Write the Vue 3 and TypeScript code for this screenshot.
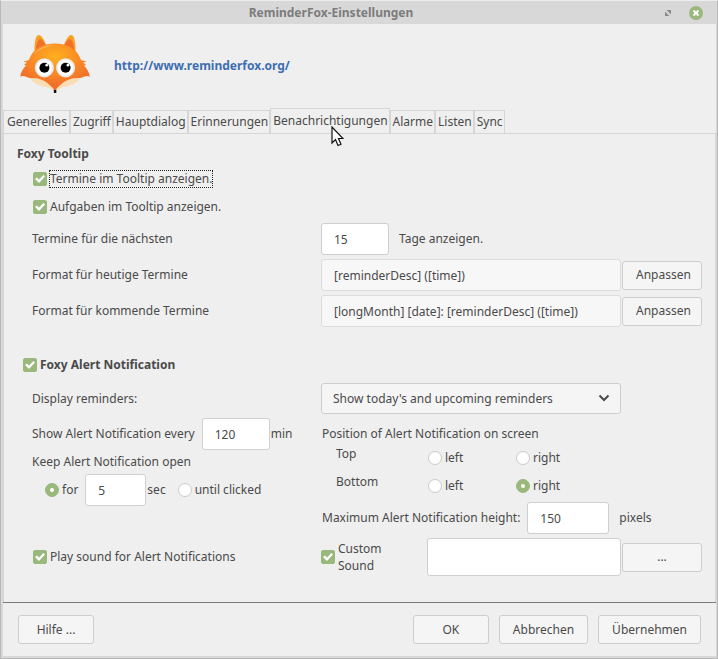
<script setup lang="ts">
import { ref } from 'vue'

const tabs: string[] = [
  'Generelles',
  'Zugriff',
  'Hauptdialog',
  'Erinnerungen',
  'Benachrichtigungen',
  'Alarme',
  'Listen',
  'Sync',
]
const activeTab = ref('Benachrichtigungen')

const showEvents = ref(true)
const showTodos = ref(true)
const days = ref('15')
const todayFormat = ref('[reminderDesc] ([time])')
const upcomingFormat = ref('[longMonth] [date]: [reminderDesc] ([time])')

const alertEnabled = ref(true)
const displayMode = ref('upcoming')
const interval = ref('120')
const keepOpen = ref('for')
const seconds = ref('5')
const position = ref('bottom-right')
const maxHeight = ref('150')
const playSound = ref(true)
const customSound = ref(true)
const soundFile = ref('')
</script>

<template>
  <div class="window">
    <header class="titlebar">
      <h1 class="title">ReminderFox-Einstellungen</h1>
      <div class="window-buttons">
        <button type="button" class="win-btn" aria-label="Maximieren">
          <svg width="6" height="6" viewBox="0 0 6 6" fill="#8c8c8c">
            <path d="M1.500 0H6V4.500zM0 1.500L4.500 6H0z" />
          </svg>
        </button>
        <button type="button" class="win-btn" aria-label="Schließen">
          <svg width="14" height="14" viewBox="0 0 14 14">
            <circle cx="7" cy="7" r="7" fill="#9ab87c" />
            <path d="M4.500 4.500L9.500 9.500M9.500 4.500L4.500 9.500" stroke="#fff" stroke-width="2" />
          </svg>
        </button>
      </div>
    </header>

    <main class="content">
      <div class="brand">
        <svg class="fox" width="70" height="58" viewBox="0 0 210 175" aria-hidden="true">
          <defs>
            <radialGradient id="fur" cx="50%" cy="28%" r="60%">
              <stop offset="0" stop-color="#ffb01c" />
              <stop offset="0.5" stop-color="#fa9025" />
              <stop offset="1" stop-color="#f26f2a" />
            </radialGradient>
            <radialGradient id="eye" cx="50%" cy="50%" r="50%">
              <stop offset="0.7" stop-color="#ffffff" />
              <stop offset="1" stop-color="#dedfe3" />
            </radialGradient>
          </defs>
          <path d="M43 52C43 28 45 0 56 0C64 0 72 14 78 30L60 52z" fill="#f9a01f" />
          <path d="M167 52C167 28 165 0 154 0C146 0 138 14 132 30L150 52z" fill="#f9a01f" />
          <path d="M46 52C47 32 53 12 61 12C68 14 74 24 78 34z" fill="#f1702c" />
          <path d="M164 52C163 32 157 12 149 12C142 14 136 24 132 34z" fill="#f1702c" />
          <path d="M28 128C36 144 62 156 80 157L105 168L130 157C148 156 174 144 182 128L105 120z" fill="#f8ddb5" />
          <path
            d="M0 126C2 112 10 100 17 93L12 88L21 84L10 80C20 78 24 77 27 74C38 43 67 26 105 26C143 26 172 43 183 74C186 77 190 78 200 80L189 84L198 88L193 93C200 100 208 112 210 126C198 120 190 130 178 130C150 128 128 140 105 167C82 140 60 128 32 130C20 130 12 120 0 126z"
            fill="url(#fur)"
          />
          <path d="M40 59C55 38 80 29 111 30C80 34 58 43 40 59z" fill="#ffc36a" opacity="0.7" />
          <circle cx="73" cy="99" r="29" fill="url(#eye)" />
          <circle cx="137" cy="99" r="29" fill="url(#eye)" />
          <circle cx="73" cy="99" r="15" fill="#000" />
          <circle cx="137" cy="99" r="15" fill="#000" />
          <circle cx="80" cy="91" r="4" fill="#fff" />
          <circle cx="144" cy="91" r="4" fill="#fff" />
          <path d="M101 165H109V175H102z" fill="#111" />
        </svg>
        <a class="site" href="http://www.reminderfox.org/">http://www.reminderfox.org/</a>
      </div>

      <div class="tabs" role="tablist">
        <button
          v-for="tab in tabs"
          :key="tab"
          type="button"
          role="tab"
          class="tab"
          :class="{ active: tab === activeTab }"
          :aria-selected="tab === activeTab"
          @click="activeTab = tab"
        >
          {{ tab }}
          <svg v-if="tab === 'Benachrichtigungen'" class="pointer" width="13" height="21" viewBox="0 0 13 21" aria-hidden="true">
            <path d="M1 1V17L4.500 13.500L7 19.500L10 18.200L7.500 12.500H12z" fill="#fff" stroke="#111" stroke-width="1.200" />
          </svg>
        </button>
      </div>

      <section class="panel" role="tabpanel">
        <h2 class="heading">Foxy Tooltip</h2>
        <div class="checks">
          <label class="choice"><input v-model="showEvents" type="checkbox" /><span class="focused">Termine im Tooltip anzeigen.</span></label>
          <label class="choice"><input v-model="showTodos" type="checkbox" /><span>Aufgaben im Tooltip anzeigen.</span></label>
        </div>

        <div class="rows">
          <div class="row">
            <label for="days">Termine für die nächsten</label>
            <div class="field">
              <input id="days" v-model="days" class="text small" type="text" />
              <span class="unit">Tage anzeigen.</span>
            </div>
          </div>
          <div class="row">
            <label for="today">Format für heutige Termine</label>
            <div class="field">
              <input id="today" v-model="todayFormat" class="text grow" type="text" readonly />
              <button type="button" class="btn customize">Anpassen</button>
            </div>
          </div>
          <div class="row">
            <label for="upcoming">Format für kommende Termine</label>
            <div class="field">
              <input id="upcoming" v-model="upcomingFormat" class="text grow" type="text" readonly />
              <button type="button" class="btn customize">Anpassen</button>
            </div>
          </div>
        </div>

        <label class="choice alert-toggle"><input v-model="alertEnabled" type="checkbox" /><strong>Foxy Alert Notification</strong></label>

        <div class="row display-row">
          <label for="display">Display reminders:</label>
          <div class="select">
            <select id="display" v-model="displayMode">
              <option value="upcoming">Show today's and upcoming reminders</option>
              <option value="today">Show today's reminders</option>
            </select>
            <svg class="chevron" width="12" height="8" viewBox="0 0 12 8" aria-hidden="true">
              <path d="M1.500 1.500L6 6L10.500 1.500" fill="none" stroke="#4a4a4a" stroke-width="2" />
            </svg>
          </div>
        </div>

        <div class="row split">
          <div class="left">
            <div class="line tall">
              <label for="interval">Show Alert Notification every</label>
              <input id="interval" v-model="interval" class="text small" type="text" />
              <span>min</span>
            </div>
            <div class="line keep">Keep Alert Notification open</div>
            <div class="line tall keep-options">
              <label class="choice"><input v-model="keepOpen" type="radio" name="keep" value="for" /><span>for</span></label>
              <input v-model="seconds" class="text seconds" type="text" aria-label="sec" />
              <span>sec</span>
              <label class="choice until"><input v-model="keepOpen" type="radio" name="keep" value="click" /><span>until clicked</span></label>
            </div>
          </div>

          <div class="right">
            <div class="line tall">Position of Alert Notification on screen</div>
            <div class="positions">
              <span>Top</span>
              <label class="choice"><input v-model="position" type="radio" name="position" value="top-left" /><span>left</span></label>
              <label class="choice"><input v-model="position" type="radio" name="position" value="top-right" /><span>right</span></label>
              <span>Bottom</span>
              <label class="choice"><input v-model="position" type="radio" name="position" value="bottom-left" /><span>left</span></label>
              <label class="choice"><input v-model="position" type="radio" name="position" value="bottom-right" /><span>right</span></label>
            </div>
            <div class="line tall">
              <label for="height">Maximum Alert Notification height:</label>
              <input id="height" v-model="maxHeight" class="text height" type="text" />
              <span class="unit">pixels</span>
            </div>
          </div>
        </div>

        <div class="row sound">
          <label class="choice"><input v-model="playSound" type="checkbox" /><span>Play sound for Alert Notifications</span></label>
          <div class="field">
            <label class="choice custom"><input v-model="customSound" type="checkbox" /><span>Custom Sound</span></label>
            <input v-model="soundFile" class="text grow file" type="text" aria-label="Custom Sound" />
            <button type="button" class="btn customize">...</button>
          </div>
        </div>
      </section>

      <footer class="footer">
        <button type="button" class="btn help">Hilfe ...</button>
        <button type="button" class="btn ok">OK</button>
        <button type="button" class="btn">Abbrechen</button>
        <button type="button" class="btn">Übernehmen</button>
      </footer>
    </main>
  </div>
</template>

<style>
body {
  background: #efefef;
}
</style>

<style scoped>
.window {
  box-sizing: border-box;
  min-height: 100vh;
  display: flex;
  flex-direction: column;
  padding: 0 1px 2px 2px;
  border: 1px solid #b8b8b8;
  border-top-color: #ececec;
  background: #d8d8d8;
  color: #4a4a4a;
  font: 12px/16px "Noto Sans", sans-serif;
}
.window *,
.window *::before {
  box-sizing: border-box;
}
.titlebar {
  display: grid;
  grid-template-columns: 1fr auto 1fr;
  align-items: center;
  height: 23px;
  padding-right: 13px;
}
.title {
  grid-column: 2;
  margin: 0 44px 0 0;
  font-size: 12px;
  font-weight: 700;
  color: #7c7c7c;
}
.window-buttons {
  display: flex;
  align-items: center;
  justify-content: flex-end;
  gap: 18px;
}
.win-btn {
  display: flex;
  padding: 0;
  border: 0;
  background: none;
}
.content {
  flex: 1;
  display: flex;
  flex-direction: column;
  background: #efefef;
}
.brand {
  display: flex;
  align-items: center;
  gap: 24px;
  height: 84px;
  padding: 0 17px;
}
.fox {
  margin-bottom: 4px;
}
.site {
  color: #3e6eb2;
  font-weight: 700;
  text-decoration: none;
}
.tabs {
  display: flex;
  align-items: flex-end;
  height: 25px;
}
.tab {
  position: relative;
  height: 23px;
  padding: 0 1px 1px 2px;
  border: 1px solid #d6d6d6;
  border-bottom: 0;
  background: #efefef;
  color: inherit;
  font: inherit;
  white-space: nowrap;
}
.tab:first-child {
  padding-left: 3px;
  padding-right: 2px;
}
.tab.active {
  height: 25px;
}
.pointer {
  position: absolute;
  z-index: 1;
  left: 60px;
  top: 17px;
}
.panel {
  flex: 1;
  padding: 12px 13px 25px 13px;
  border: 1px solid #d6d6d6;
  border-bottom: 0;
}
.heading {
  margin: 0;
  font-size: 12px;
  font-weight: 700;
}
.checks {
  display: flex;
  flex-direction: column;
  align-items: flex-start;
  gap: 8px;
  padding: 7px 0 6px 16px;
}
.choice {
  display: flex;
  align-items: center;
  gap: 3px;
  min-height: 20px;
}
.focused {
  outline: 1px dotted #222;
}
input[type="checkbox"],
input[type="radio"] {
  appearance: none;
  flex: none;
  display: grid;
  place-items: center;
  width: 14px;
  height: 14px;
  margin: 0;
  border: 1px solid #cacaca;
  background: #fff;
}
input[type="checkbox"] {
  border-radius: 2px;
}
input[type="radio"] {
  border-radius: 50%;
}
input[type="checkbox"]:checked,
input[type="radio"]:checked {
  border-color: #9ab87c;
  background: #9ab87c;
}
input[type="checkbox"]:checked::before {
  content: "";
  width: 10px;
  height: 8px;
  background: #fff;
  clip-path: polygon(0 50%, 18% 30%, 40% 56%, 84% 0, 100% 18%, 40% 100%);
}
input[type="radio"]:checked::before {
  content: "";
  width: 4px;
  height: 4px;
  border-radius: 50%;
  background: #fff;
}
.row {
  display: grid;
  grid-template-columns: 289px minmax(0, 1fr);
  align-items: center;
  padding-left: 15px;
}
.rows {
  display: grid;
  gap: 4px;
}
.field {
  display: flex;
  align-items: center;
  gap: 1px;
}
.text {
  min-width: 0;
  height: 32px;
  padding: 0 12px;
  border: 1px solid #cfcfcf;
  border-radius: 3px;
  background: #fff;
  color: inherit;
  font: inherit;
}
.text:read-only {
  border-color: #dcdcdc;
  background: #f7f7f7;
}
.small {
  width: 68px;
}
.seconds {
  width: 61px;
}
.height {
  width: 82px;
}
.grow {
  flex: 1;
}
.file {
  height: 38px;
}
.unit {
  padding-left: 9px;
}
.btn {
  height: 29px;
  padding: 0 13px;
  border: 1px solid #cdcdcd;
  border-radius: 3px;
  background: #f5f5f5;
  color: inherit;
  font: inherit;
}
.customize {
  flex: none;
  width: 80px;
}
.alert-toggle {
  margin-top: 28px;
  padding-left: 6px;
}
.display-row {
  padding-top: 8px;
}
.select {
  position: relative;
  margin-right: 81px;
}
.select select {
  appearance: none;
  display: block;
  width: 100%;
  height: 31px;
  padding: 0 11px;
  border: 1px solid #cdcdcd;
  border-radius: 3px;
  background: #f5f5f5;
  color: inherit;
  font: inherit;
}
.chevron {
  position: absolute;
  right: 11px;
  top: 11px;
  pointer-events: none;
}
.split {
  align-items: start;
  padding-top: 4px;
}
.line {
  display: flex;
  align-items: center;
  gap: 1px;
  white-space: nowrap;
}
.line label + .text {
  margin-left: 6px;
}
.tall {
  height: 32px;
}
.keep {
  height: 24px;
}
.keep-options {
  padding-left: 13px;
}
.until {
  margin-left: 11px;
}
.right {
  padding-left: 1px;
}
.positions {
  display: grid;
  grid-template-columns: 92px 88px auto;
  grid-auto-rows: 28px;
  justify-content: start;
  padding-left: 14px;
  margin-top: -4px;
}
.positions .choice {
  height: 24px;
}
.sound {
  padding-top: 4px;
}
.sound > .choice {
  padding-left: 1px;
}
.custom {
  flex: none;
  width: 105px;
  line-height: 17px;
}
.custom span {
  width: 50px;
}
.footer {
  display: flex;
  gap: 10px;
  padding: 12px 15px;
  border-top: 1px solid #7c7c7c;
}
.help {
  width: 76px;
  margin-right: auto;
}
.ok {
  width: 76px;
}
</style>
